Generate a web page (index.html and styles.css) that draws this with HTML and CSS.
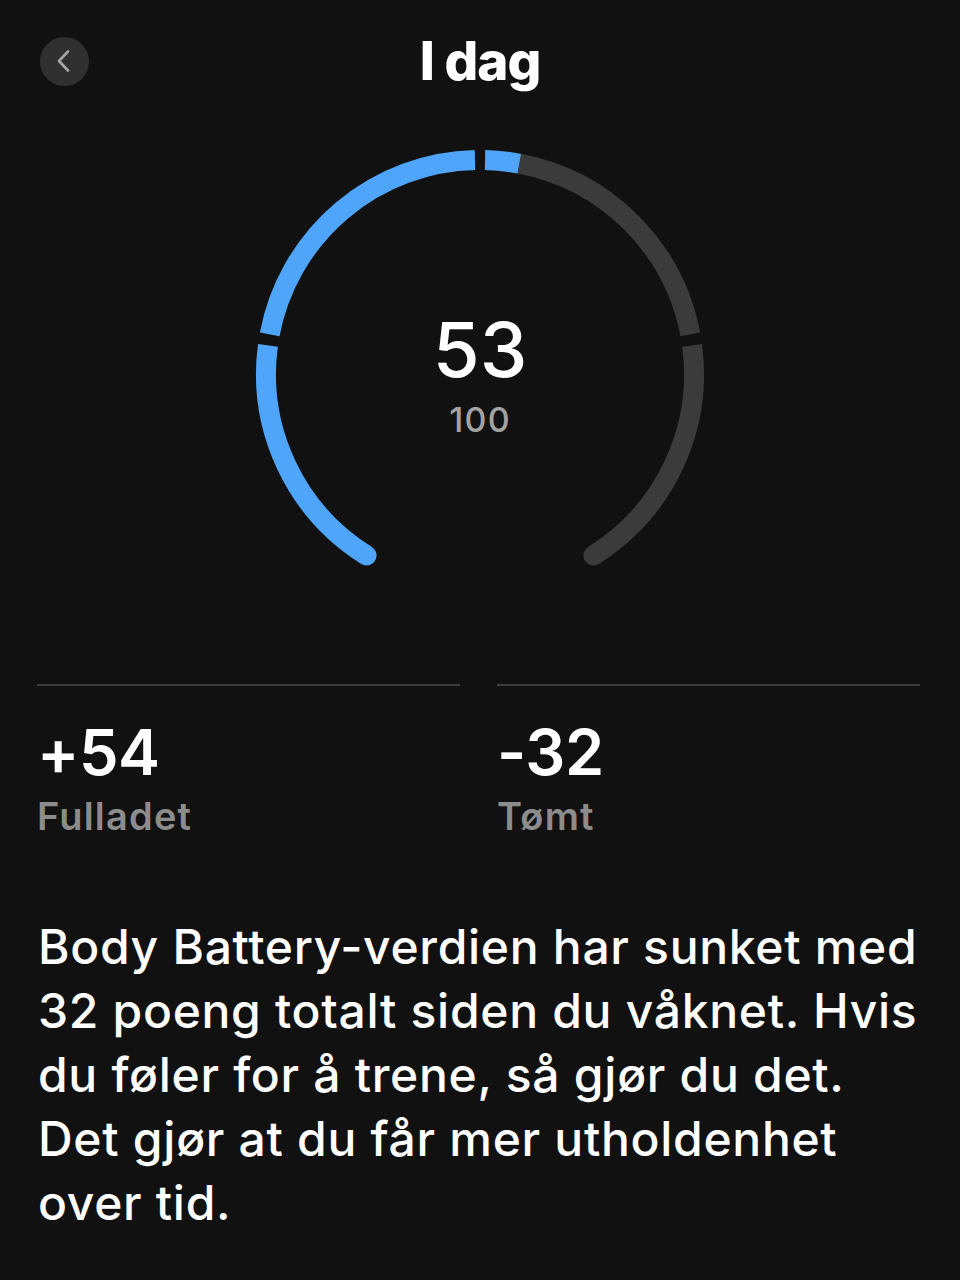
FILE: index.html
```html
<!DOCTYPE html>
<html lang="no">
<head>
<meta charset="utf-8">
<title>I dag</title>
<link rel="stylesheet" href="styles.css">
</head>
<body>
<div class="screen">
  <header class="header">
    <div class="header-left">
      <button class="back" aria-label="Tilbake">
        <svg width="16" height="22" viewBox="0 0 16 22" aria-hidden="true">
          <path d="M12 1.5 L3 11 L12 20.5" fill="none" stroke="#a6a6a6" stroke-width="2.6" stroke-linecap="round" stroke-linejoin="round"/>
        </svg>
      </button>
    </div>
    <h1 class="title">I dag</h1>
    <div class="header-right"></div>
  </header>

  <section class="gauge">
    <svg class="gauge-svg" width="460" height="460" viewBox="0 0 460 460" aria-hidden="true">
      <g fill="none" stroke-width="20" stroke-linecap="butt">
        <path class="seg-blue" d="M116.6 411.5 A214 214 0 0 1 17.93 201.33"/>
        <path class="seg-blue" d="M19.72 190.27 A214 214 0 0 1 224.96 16.06"/>
        <path class="seg-blue" d="M235.04 16.06 A214 214 0 0 1 269.73 19.72"/>
        <path class="seg-gray" d="M269.2 19.65 A214 214 0 0 1 440.28 190.27"/>
        <path class="seg-gray" d="M442.07 201.33 A214 214 0 0 1 343.4 411.5"/>
      </g>
      <circle class="cap-blue" cx="116.6" cy="411.5" r="10"/>
      <circle class="cap-gray" cx="343.4" cy="411.5" r="10"/>
    </svg>
    <div class="gauge-text">
      <div class="gauge-value">53</div>
      <div class="gauge-max">100</div>
    </div>
  </section>

  <section class="stats">
    <div class="stat">
      <div class="stat-value">+54</div>
      <div class="stat-label">Fulladet</div>
    </div>
    <div class="stat">
      <div class="stat-value">-32</div>
      <div class="stat-label">Tømt</div>
    </div>
  </section>

  <p class="summary">Body Battery-verdien har sunket med 32 poeng totalt siden du våknet. Hvis du føler for å trene, så gjør du det. Det gjør at du får mer utholdenhet over tid.</p>
</div>
</body>
</html>
```

FILE: styles.css
```css
* { box-sizing: border-box; }

html, body {
  margin: 0;
  padding: 0;
  background: #111111;
}

body {
  font-family: Inter, "Noto Sans", "Liberation Sans", sans-serif;
  color: #ffffff;
  width: 960px;
  min-height: 1280px;
}

.screen {
  display: flex;
  flex-direction: column;
}

.header {
  display: grid;
  grid-template-columns: 1fr auto 1fr;
  align-items: center;
  padding-top: 29px;
}

.header-left {
  padding-left: 40px;
  display: flex;
  align-items: center;
}

.back {
  width: 49px;
  height: 49px;
  border-radius: 50%;
  background: #303030;
  border: none;
  padding: 0 2px 0 0;
  margin: 0;
  display: flex;
  align-items: center;
  justify-content: center;
}

.title {
  margin: 0;
  font-size: 53px;
  line-height: 64px;
  font-weight: 800;
  letter-spacing: -1px;
  text-align: center;
}

.gauge {
  margin: 51px auto 0;
  width: 460px;
  height: 460px;
  display: grid;
}

.gauge-svg,
.gauge-text {
  grid-area: 1 / 1;
}

.seg-blue { stroke: #4fa5fa; }
.seg-gray { stroke: #3b3b3b; }
.cap-blue { fill: #4fa5fa; }
.cap-gray { fill: #3b3b3b; }

.gauge-text {
  display: flex;
  flex-direction: column;
  align-items: center;
  padding-top: 165px;
}

.gauge-value {
  font-size: 76px;
  line-height: 80px;
  font-weight: 500;
  letter-spacing: 0;
}

.gauge-max {
  margin-top: 11px;
  font-size: 34px;
  line-height: 40px;
  font-weight: 500;
  color: #a3a3a3;
  letter-spacing: 1.2px;
}

.stats {
  margin-top: 80px;
  padding: 0 40px 0 37px;
  display: grid;
  grid-template-columns: 1fr 1fr;
  column-gap: 37px;
}

.stat {
  border-top: 2px solid #3c3c3c;
  padding-top: 31px;
  display: flex;
  flex-direction: column;
}

.stat-value {
  font-size: 63px;
  line-height: 70px;
  font-weight: 600;
  letter-spacing: -0.5px;
}

.stat-label {
  margin-top: 7px;
  font-size: 38px;
  line-height: 44px;
  font-weight: 600;
  color: #8c8c8c;
  letter-spacing: 1.2px;
}

.summary {
  margin: 77px 0 0;
  padding: 0 30px 0 38px;
  font-size: 48px;
  line-height: 64px;
  font-weight: 500;
  letter-spacing: 0.7px;
}
```
